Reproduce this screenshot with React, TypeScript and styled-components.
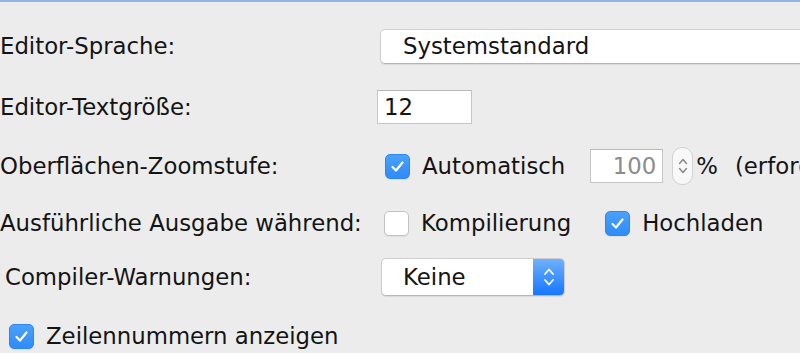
import React from "react";
import styled, { createGlobalStyle } from "styled-components";

const GlobalStyle = createGlobalStyle`
  html, body {
    margin: 0;
    padding: 0;
    overflow: hidden;
    background: #ececec;
  }
  body {
    font-family: "DejaVu Sans", "Noto Sans", sans-serif;
    font-size: 22.8px;
    color: #141414;
  }
`;

const Window = styled.div`
  width: 800px;
  height: 353px;
  overflow: hidden;
  background: #ececec;
`;

const FocusBar = styled.div`
  height: 2px;
  background: #8fb6e6;
`;

const Form = styled.div`
  display: flex;
  flex-direction: column;
  padding-top: 14px;
`;

const Row = styled.div<{ $h: number }>`
  display: grid;
  grid-template-columns: 377px 1fr;
  align-items: center;
  height: ${(p) => p.$h}px;
`;

const Label = styled.div<{ $indent?: number }>`
  padding-left: ${(p) => p.$indent ?? 0}px;
  white-space: nowrap;
`;

const Controls = styled.div<{ $offset?: number }>`
  display: flex;
  align-items: center;
  margin-left: ${(p) => p.$offset ?? 0}px;
  white-space: nowrap;
`;

const WideSelect = styled.div`
  box-sizing: border-box;
  width: 440px;
  height: 35px;
  background: #fff;
  border: 1px solid #cfcfcf;
  border-bottom-color: #b4b4b4;
  border-radius: 5px;
  box-shadow: 0 1px 1px rgba(0, 0, 0, 0.08);
  display: flex;
  align-items: center;
  padding-left: 22px;
`;

const TextField = styled.div<{ $w: number; $muted?: boolean }>`
  box-sizing: border-box;
  width: ${(p) => p.$w}px;
  height: 34px;
  background: #fff;
  border: 1px solid #c6c6c6;
  border-top-color: #b8b8b8;
  display: flex;
  align-items: center;
  justify-content: ${(p) => (p.$muted ? "flex-end" : "flex-start")};
  padding: 0 6px;
  color: ${(p) => (p.$muted ? "#8c8c8c" : "#141414")};
`;

const Box = styled.span<{ $checked?: boolean }>`
  box-sizing: border-box;
  width: 25px;
  height: 25px;
  border-radius: 5px;
  display: inline-flex;
  align-items: center;
  justify-content: center;
  flex-shrink: 0;
  background: ${(p) => (p.$checked ? "linear-gradient(#4aa0fb, #2f8cf7)" : "#fff")};
  border: 1px solid ${(p) => (p.$checked ? "#2f86ef" : "#c2c2c2")};
  box-shadow: 0 1px 1px rgba(0, 0, 0, 0.06);
`;

const CheckText = styled.span<{ $gap?: number }>`
  margin-left: 12px;
  margin-right: ${(p) => p.$gap ?? 0}px;
`;

const Spinner = styled.div`
  box-sizing: border-box;
  width: 21px;
  height: 38px;
  margin-left: 9px;
  margin-right: 3px;
  border: 1px solid #d2d2d2;
  border-radius: 10px;
  background: #f8f8f8;
  display: flex;
  align-items: center;
  justify-content: center;
`;

const Note = styled.span`
  margin-left: 17px;
`;

const PopUp = styled.div`
  box-sizing: border-box;
  width: 184px;
  height: 38px;
  display: flex;
  border: 1px solid #cdcdcd;
  border-bottom-color: #b6b6b6;
  border-radius: 5px;
  background: #fff;
  overflow: hidden;
  box-shadow: 0 1px 1px rgba(0, 0, 0, 0.08);
`;

const PopUpValue = styled.div`
  flex: 1;
  display: flex;
  align-items: center;
  padding-left: 21px;
`;

const PopUpArrows = styled.div`
  width: 31px;
  display: flex;
  align-items: center;
  justify-content: center;
  background: linear-gradient(#6fb1fb, #1576ff);
`;

const Check = () => (
  <svg width="17" height="17" viewBox="0 0 17 17">
    <path d="M3.5 9 L7 12.5 L13.5 4.5" fill="none" stroke="#fff" strokeWidth="2.2" strokeLinecap="round" strokeLinejoin="round" />
  </svg>
);

const Chevrons = ({ color, w = 14 }: { color: string; w?: number }) => (
  <svg width={w} height="26" viewBox="0 0 14 26">
    <path d="M3 10 L7 5.5 L11 10" fill="none" stroke={color} strokeWidth="1.8" strokeLinecap="round" strokeLinejoin="round" />
    <path d="M3 16 L7 20.5 L11 16" fill="none" stroke={color} strokeWidth="1.8" strokeLinecap="round" strokeLinejoin="round" />
  </svg>
);

const CheckBox = ({ checked }: { checked?: boolean }) => (
  <Box $checked={checked}>{checked && <Check />}</Box>
);

export default function App() {
  return (
    <Window>
      <GlobalStyle />
      <FocusBar />
      <Form>
        <Row $h={60}>
          <Label>Editor-Sprache:</Label>
          <Controls $offset={3}>
            <WideSelect>Systemstandard</WideSelect>
          </Controls>
        </Row>
        <Row $h={62}>
          <Label>Editor-Textgröße:</Label>
          <Controls>
            <TextField $w={95}>12</TextField>
          </Controls>
        </Row>
        <Row $h={56}>
          <Label>Oberflächen-Zoomstufe:</Label>
          <Controls $offset={8}>
            <CheckBox checked />
            <CheckText $gap={25}>Automatisch</CheckText>
            <TextField $w={73} $muted>100</TextField>
            <Spinner>
              <Chevrons color="#8a8a8a" w={12} />
            </Spinner>
            <span>%</span>
            <Note>(erfordert Neustart von Arduino)</Note>
          </Controls>
        </Row>
        <Row $h={58}>
          <Label>Ausführliche Ausgabe während:</Label>
          <Controls $offset={7}>
            <CheckBox />
            <CheckText $gap={34}>Kompilierung</CheckText>
            <CheckBox checked />
            <CheckText>Hochladen</CheckText>
          </Controls>
        </Row>
        <Row $h={50}>
          <Label $indent={5}>Compiler-Warnungen:</Label>
          <Controls $offset={4}>
            <PopUp>
              <PopUpValue>Keine</PopUpValue>
              <PopUpArrows>
                <Chevrons color="#fff" />
              </PopUpArrows>
            </PopUp>
          </Controls>
        </Row>
        <Row $h={68}>
          <Controls $offset={9}>
            <CheckBox checked />
            <CheckText>Zeilennummern anzeigen</CheckText>
          </Controls>
        </Row>
      </Form>
    </Window>
  );
}
